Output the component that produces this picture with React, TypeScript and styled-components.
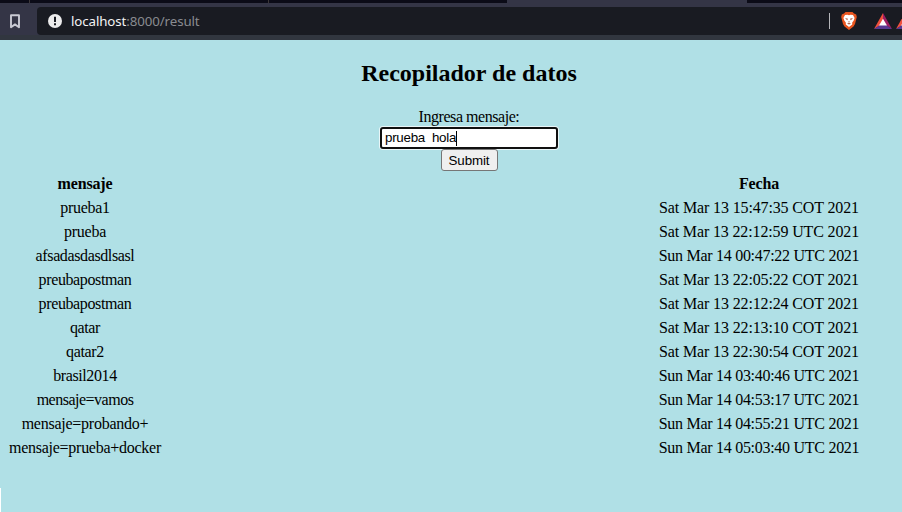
import React from "react";
import styled, { createGlobalStyle } from "styled-components";

const GlobalStyle = createGlobalStyle`
  * { box-sizing: border-box; }
  html, body { margin: 0; padding: 0; overflow: hidden; }
  body { background: #b0e0e6; }
`;

const Window = styled.div`
  width: 902px;
  height: 512px;
  overflow: hidden;
  display: flex;
  flex-direction: column;
  background: #b0e0e6;
`;

const TabStrip = styled.div`
  flex: none;
  height: 3px;
  display: flex;
  background: #0b0b17;
`;

const Tab = styled.div<{ $width: number; $active?: boolean; $divider?: boolean }>`
  width: ${(p) => p.$width}px;
  background: ${(p) => (p.$active ? "#343546" : "transparent")};
  border-right: ${(p) => (p.$divider ? "1px solid #3b3638" : "none")};
`;

const Toolbar = styled.div`
  flex: none;
  width: 914px;
  height: 37px;
  display: flex;
  align-items: flex-start;
  padding: 4px 0 0 9px;
  background: linear-gradient(#343546 0 32px, #31363f 32px);
`;

const BookmarkIcon = styled.svg`
  flex: none;
  display: block;
  width: 12px;
  height: 15px;
  margin: 7px 16px 0 0;
`;

const AddressBar = styled.div`
  flex: 1;
  height: 28px;
  display: flex;
  align-items: center;
  padding-left: 11px;
  overflow: hidden;
  background: #191b22;
  border-radius: 4px 0 0 4px;
`;

const BarIcon = styled.svg<{ $w: number; $h: number; $gap?: number }>`
  flex: none;
  display: block;
  width: ${(p) => p.$w}px;
  height: ${(p) => p.$h}px;
  margin-left: ${(p) => p.$gap ?? 0}px;
`;

const Url = styled.div`
  flex: 1;
  margin-left: 9px;
  font: 13.3px/20px "Noto Sans", sans-serif;
  letter-spacing: -0.1px;
  color: #898b90;
  white-space: nowrap;
`;

const Host = styled.span`
  color: #f4f4f5;
`;

const Divider = styled.div`
  flex: none;
  width: 1px;
  height: 16px;
  background: #b5b6ba;
`;

const Page = styled.main`
  position: relative;
  flex: 1;
  width: 938px;
  padding: 19px 8px 0;
  font: 16px/18px "Liberation Serif", "Times New Roman", serif;
  color: #000;
`;

const Title = styled.h2`
  margin: 0 0 21px;
  font-size: 24px;
  line-height: 28px;
  font-weight: bold;
  text-align: center;
`;

const Form = styled.form`
  display: flex;
  flex-direction: column;
  align-items: center;
`;

const Label = styled.label`
  height: 19px;
  letter-spacing: -0.45px;
`;

const TextField = styled.div`
  width: 178px;
  height: 22px;
  display: flex;
  align-items: center;
  padding-left: 3px;
  background: #fff;
  border: 2px solid #101010;
  border-radius: 3px;
  box-shadow: 0 0 0 1px #e9f6f8;
  font: 13.333px/18px "Liberation Sans", Arial, sans-serif;
  letter-spacing: -0.25px;
  white-space: pre;
`;

const Caret = styled.span`
  width: 1px;
  height: 15px;
  background: #000;
`;

const SubmitButton = styled.button`
  width: 57px;
  height: 22px;
  padding: 1px 0 0;
  background: #efefef;
  border: 1px solid #767676;
  border-radius: 3px;
  font: 13.333px/18px "Liberation Sans", Arial, sans-serif;
  letter-spacing: -0.1px;
  color: #000;
`;

const Table = styled.div`
  display: grid;
  grid-template-columns: 154px 202px;
  justify-content: space-between;
  grid-auto-rows: 24px;
  width: 852px;
  margin-top: 1px;
  line-height: 24px;
  text-align: center;
  white-space: nowrap;
`;

const HeadCell = styled.div`
  font-weight: bold;
  letter-spacing: -0.15px;
`;

const Cell = styled.div<{ $tracking: number }>`
  letter-spacing: ${(p) => p.$tracking}px;
`;

const EdgeMark = styled.div`
  position: absolute;
  left: 0;
  bottom: 0;
  width: 1px;
  height: 24px;
  background: #fff;
`;

const rows: [string, number, string][] = [
  ["prueba1", -0.3, "Sat Mar 13 15:47:35 COT 2021"],
  ["prueba", -0.25, "Sat Mar 13 22:12:59 UTC 2021"],
  ["afsadasdasdlsasl", -0.38, "Sun Mar 14 00:47:22 UTC 2021"],
  ["preubapostman", -0.38, "Sat Mar 13 22:05:22 COT 2021"],
  ["preubapostman", -0.38, "Sat Mar 13 22:12:24 COT 2021"],
  ["qatar", -0.4, "Sat Mar 13 22:13:10 COT 2021"],
  ["qatar2", -0.35, "Sat Mar 13 22:30:54 COT 2021"],
  ["brasil2014", -0.4, "Sun Mar 14 03:40:46 UTC 2021"],
  ["mensaje=vamos", -0.5, "Sun Mar 14 04:53:17 UTC 2021"],
  ["mensaje=probando+", -0.25, "Sun Mar 14 04:55:21 UTC 2021"],
  ["mensaje=prueba+docker", -0.26, "Sun Mar 14 05:03:40 UTC 2021"],
];

const RewardsTriangle = ({ gap }: { gap: number }) => (
  <BarIcon $w={18} $h={16} $gap={gap} viewBox="0 0 18 16">
    <path d="M9 0 0 16 9 10.5Z" fill="#f0503c" />
    <path d="M9 0 18 16 9 10.5Z" fill="#9e1f63" />
    <path d="M0 16 6 12H12L18 16Z" fill="#5a3a92" />
    <path d="M9 5.8 13 12.6H5Z" fill="#fff" />
  </BarIcon>
);

export default function App() {
  return (
    <Window>
      <GlobalStyle />
      <TabStrip>
        <Tab $width={30} $divider />
        <Tab $width={239} $divider />
        <Tab $width={238} />
        <Tab $width={240} $active />
      </TabStrip>
      <Toolbar>
        <BookmarkIcon viewBox="0 0 12 15">
          <path d="M2 1.2H10V13.2L6 10.4 2 13.2Z" fill="none" stroke="#c9cad4" strokeWidth="1.9" strokeLinejoin="round" />
        </BookmarkIcon>
        <AddressBar>
          <BarIcon $w={14} $h={14} viewBox="0 0 14 14">
            <circle cx="7" cy="7" r="7" fill="#ececed" />
            <path d="M6 2.7H8V8H6ZM6 9.2H8V11.2H6Z" fill="#191b22" />
          </BarIcon>
          <Url>
            <Host>localhost</Host>:8000/result
          </Url>
          <Divider />
          <BarIcon $w={16} $h={18} $gap={11} viewBox="0 0 16 18">
            <path d="M4.5 0H11.5L13 1.6 15.2 2.4 15.8 5 14 12 12.5 14.5 8 18 3.5 14.5 2 12 .2 5 .8 2.4 3 1.6Z" fill="#e8551f" />
            <path d="M4 3 6.5 2.7 8 3.2 9.5 2.7 12 3 13.6 6 12.6 8.8 11.2 10.6 11.2 12.4 8 15 4.8 12.4 4.8 10.6 3.4 8.8 2.4 6Z" fill="#fff" />
            <path d="M4 6 7 6.8 6.2 8.2ZM12 6 9 6.8 9.8 8.2ZM7 9.6H9L8 10.8ZM6 11.4 8 11 10 11.4 8 12.4Z" fill="#a9523a" />
          </BarIcon>
          <RewardsTriangle gap={17} />
          <RewardsTriangle gap={4} />
        </AddressBar>
      </Toolbar>
      <Page>
        <Title>Recopilador de datos</Title>
        <Form onSubmit={(e) => e.preventDefault()}>
          <Label>Ingresa mensaje:</Label>
          <TextField>
            {"prueba  hola"}
            <Caret />
          </TextField>
          <SubmitButton>Submit</SubmitButton>
        </Form>
        <Table>
          <HeadCell>mensaje</HeadCell>
          <HeadCell>Fecha</HeadCell>
          {rows.map(([message, tracking, date], i) => (
            <React.Fragment key={i}>
              <Cell $tracking={tracking}>{message}</Cell>
              <Cell $tracking={date.startsWith("Sun") ? -0.28 : -0.14}>{date}</Cell>
            </React.Fragment>
          ))}
        </Table>
        <EdgeMark />
      </Page>
    </Window>
  );
}
